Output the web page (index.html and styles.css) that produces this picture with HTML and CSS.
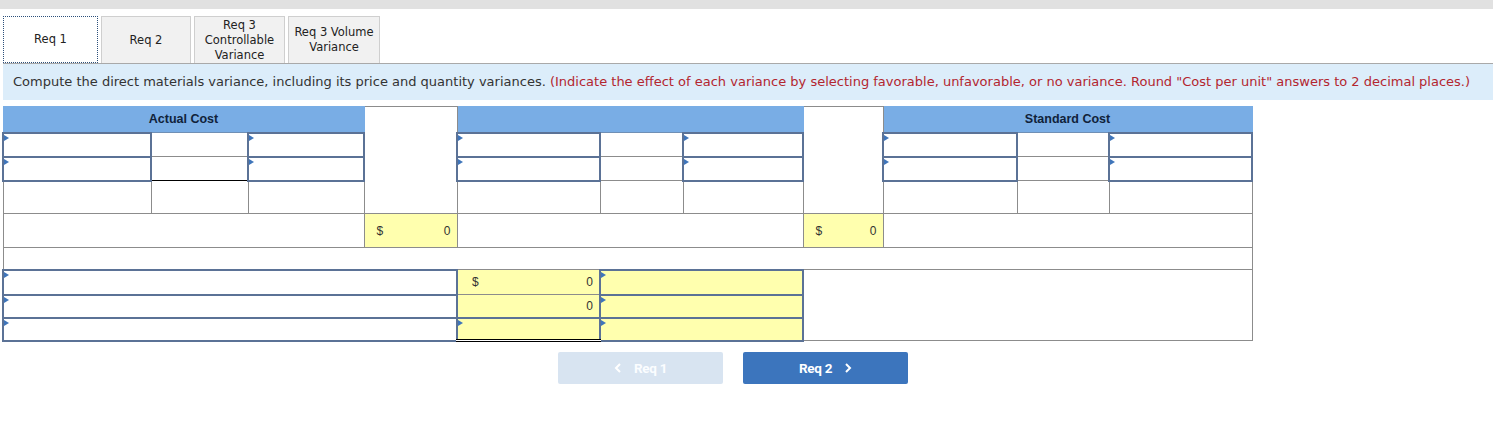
FILE: index.html
```html
<!DOCTYPE html>
<html>
<head>
<meta charset="utf-8">
<link rel="stylesheet" href="styles.css">
</head>
<body>
<div class="page">
  <div class="topbar"></div>
  <div class="tabs">
    <div class="tab active t1">Req 1</div>
    <div class="tab t2">Req 2</div>
    <div class="tab t3">Req 3<br>Controllable<br>Variance</div>
    <div class="tab t4">Req 3 Volume<br>Variance</div>
  </div>
  <div class="instr">Compute the direct materials variance, including its price and quantity variances. <span class="red">(Indicate the effect of each variance by selecting favorable, unfavorable, or no variance. Round "Cost per unit" answers to 2 decimal places.)</span></div>
  <div class="tablewrap">
    <table class="grid">
      <colgroup>
        <col style="width:148px"><col style="width:97px"><col style="width:116px">
        <col style="width:93px">
        <col style="width:143px"><col style="width:83px"><col style="width:120px">
        <col style="width:80px">
        <col style="width:134px"><col style="width:92px"><col style="width:143px">
      </colgroup>
      <tr class="rh">
        <th colspan="3" class="hd">Actual Cost</th>
        <td rowspan="4" class="blank"></td>
        <th colspan="3" class="hd"></th>
        <td rowspan="4" class="blank"></td>
        <th colspan="3" class="hd">Standard Cost</th>
      </tr>
      <tr class="r1">
        <td class="inp"></td><td></td><td class="inp"></td>
        <td class="inp"></td><td></td><td class="inp"></td>
        <td class="inp"></td><td></td><td class="inp"></td>
      </tr>
      <tr class="r2">
        <td class="inp"></td><td class="ul"></td><td class="inp"></td>
        <td class="inp"></td><td></td><td class="inp"></td>
        <td class="inp"></td><td></td><td class="inp"></td>
      </tr>
      <tr class="r3">
        <td></td><td></td><td></td>
        <td></td><td></td><td></td>
        <td></td><td></td><td></td>
      </tr>
      <tr class="r4">
        <td colspan="3"></td>
        <td class="yel money"><span>$</span><span>0</span></td>
        <td colspan="3"></td>
        <td class="yel money"><span>$</span><span>0</span></td>
        <td colspan="3"></td>
      </tr>
      <tr class="r5"><td colspan="11"></td></tr>
      <tr class="r6">
        <td colspan="4" class="inp"></td>
        <td class="yel money m2"><span>$</span><span>0</span></td>
        <td colspan="2" class="inp yel"></td>
        <td colspan="4" rowspan="3"></td>
      </tr>
      <tr class="r7">
        <td colspan="4" class="inp"></td>
        <td class="yel money m2 ul"><span></span><span>0</span></td>
        <td colspan="2" class="inp yel"></td>
      </tr>
      <tr class="r8">
        <td colspan="4" class="inp"></td>
        <td class="inp yel dbl"></td>
        <td colspan="2" class="inp yel"></td>
      </tr>
    </table>
  </div>
  <div class="nav">
    <div class="btn prev">
      <svg width="8" height="10" viewBox="0 0 8 10"><polyline points="6,1 2,5 6,9" fill="none" stroke="#ffffff" stroke-width="2"/></svg>
      <span>Req 1</span>
    </div>
    <div class="btn next">
      <span>Req 2</span>
      <svg width="8" height="10" viewBox="0 0 8 10"><polyline points="2,1 6,5 2,9" fill="none" stroke="#ffffff" stroke-width="2"/></svg>
    </div>
  </div>
</div>
</body>
</html>
```
FILE: styles.css
```css
html, body {
  margin: 0;
  padding: 0;
  background: #ffffff;
}
.page {
  width: 1493px;
  font-family: "DejaVu Sans", Verdana, sans-serif;
  color: #222;
}
.topbar {
  height: 9px;
  background: #e1e1e1;
}
.tabs {
  display: flex;
  gap: 3px;
  padding-left: 3px;
  margin-top: 7px;
  height: 47px;
}
.tab {
  box-sizing: border-box;
  height: 47px;
  background: #f1f1f1;
  border: 1px solid #cfcfcf;
  border-bottom: none;
  font-size: 11.5px;
  line-height: 15px;
  color: #222;
  display: flex;
  align-items: center;
  justify-content: center;
  text-align: center;
}
.tab.active {
  background: #fff;
  border: 1px dotted #2b4f7a;
}
.t1 { width: 95px; }
.t2 { width: 90px; }
.t3 { width: 91px; }
.t4 { width: 92px; }
.instr {
  margin-left: 3px;
  box-sizing: border-box;
  height: 37px;
  border-top: 1px solid #a9a9a9;
  background: #dcedfa;
  font-size: 13px;
  line-height: 36px;
  padding-left: 10px;
  color: #333;
  white-space: nowrap;
}
.red { color: #b3262f; }
.tablewrap {
  padding-left: 2px;
  margin-top: 6px;
}
.grid {
  border-collapse: collapse;
  table-layout: fixed;
  width: 1249px;
  font-family: "Liberation Sans", Arial, sans-serif;
  font-size: 12px;
}
.grid td, .grid th {
  border: 1px solid #8c8c8c;
  padding: 0;
  position: relative;
}
.grid th.hd {
  background: #79ade5;
  color: #10223a;
  font-weight: bold;
  font-size: 12.5px;
  text-align: center;
  border-color: #79ade5;
  border-bottom: 1px solid #6f8fb5;
}
.grid td.blank { background: #fff; }
.rh { height: 26px; }
.r1 { height: 24px; }
.r2 { height: 24px; }
.r3 { height: 33px; }
.r4 { height: 34px; }
.r5 { height: 22px; }
.r6 { height: 25px; }
.r7 { height: 23px; }
.r8 { height: 23px; }
.grid td.inp {
  border: 2px solid #5b7296;
}
.grid td.inp::before {
  content: "";
  position: absolute;
  left: 0;
  top: 1px;
  width: 0;
  height: 0;
  border-top: 3.5px solid transparent;
  border-bottom: 3.5px solid transparent;
  border-left: 5px solid #3f75ba;
}
.grid td.yel { background: #ffffae; }
.grid td.ul { border-bottom: 1px solid #000; }
.grid td.dbl { border-bottom: 3px double #000; }
.money span {
  display: inline-block;
  color: #333;
}
.money {
  padding: 0 6px 0 12px !important;
}
.money span:first-child { float: left; }
.money span:last-child { float: right; }
.m2 {
  padding: 0 6px 0 14px !important;
}
.nav {
  display: flex;
  gap: 20px;
  padding-left: 558px;
  margin-top: 10px;
}
.btn {
  width: 165px;
  height: 32px;
  border-radius: 2px;
  display: flex;
  align-items: center;
  justify-content: center;
  gap: 12px;
  font-family: Roboto, "Liberation Sans", sans-serif;
  font-weight: bold;
  font-size: 13.5px;
  color: #fff;
  letter-spacing: -0.3px;
}
.prev { background: #d8e4f1; color: #fbfdff; }
.next { background: #3c75bd; }
```
